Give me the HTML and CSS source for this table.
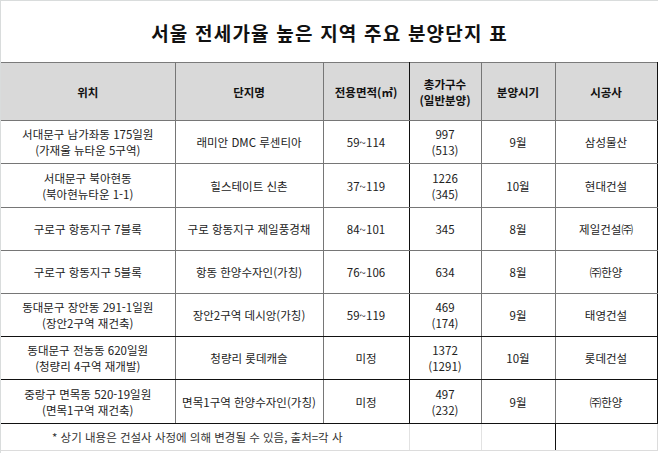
FILE: index.html
```html
<!DOCTYPE html>
<html lang="ko">
<head>
<meta charset="utf-8">
<link rel="stylesheet" href="styles.css">
</head>
<body>
<div class="sheet">
  <div class="title">서울 전세가율 높은 지역 주요 분양단지 표</div>
  <table class="grid">
    <colgroup>
      <col class="c1"><col class="c2"><col class="c3"><col class="c4"><col class="c5"><col class="c6">
    </colgroup>
    <thead>
      <tr class="head">
        <td>위치</td><td>단지명</td><td>전용면적(㎡)</td><td>총가구수<br>(일반분양)</td><td>분양시기</td><td>시공사</td>
      </tr>
    </thead>
    <tbody>
      <tr class="r43">
        <td>서대문구 남가좌동 175일원<br>(가재울 뉴타운 5구역)</td><td>래미안 DMC 루센티아</td><td>59~114</td><td>997<br>(513)</td><td>9월</td><td>삼성물산</td>
      </tr>
      <tr class="r44">
        <td>서대문구 북아현동<br>(북아현뉴타운 1-1)</td><td>힐스테이트 신촌</td><td>37~119</td><td>1226<br>(345)</td><td>10월</td><td>현대건설</td>
      </tr>
      <tr class="r43">
        <td>구로구 항동지구 7블록</td><td>구로 항동지구 제일풍경채</td><td>84~101</td><td>345</td><td>8월</td><td>제일건설㈜</td>
      </tr>
      <tr class="r43">
        <td>구로구 항동지구 5블록</td><td>항동 한양수자인(가칭)</td><td>76~106</td><td>634</td><td>8월</td><td>㈜한양</td>
      </tr>
      <tr class="r43 dark">
        <td>동대문구 장안동 291-1일원<br>(장안2구역 재건축)</td><td>장안2구역 데시앙(가칭)</td><td>59~119</td><td>469<br>(174)</td><td>9월</td><td>태영건설</td>
      </tr>
      <tr class="r43 dark">
        <td>동대문구 전농동 620일원<br>(청량리 4구역 재개발)</td><td>청량리 롯데캐슬</td><td>미정</td><td>1372<br>(1291)</td><td>10월</td><td>롯데건설</td>
      </tr>
      <tr class="r44 dark">
        <td>중랑구 면목동 520-19일원<br>(면목1구역 재건축)</td><td>면목1구역 한양수자인(가칭)</td><td>미정</td><td>497<br>(232)</td><td>9월</td><td>㈜한양</td>
      </tr>
      <tr class="foot">
        <td colspan="3" class="note">* 상기 내용은 건설사 사정에 의해 변경될 수 있음, 출처=각 사</td><td></td><td></td><td></td>
      </tr>
    </tbody>
  </table>
</div>
</body>
</html>
```

FILE: styles.css
```css
html, body {
  margin: 0;
  padding: 0;
  background: #ffffff;
}

body {
  font-family: "Noto Sans CJK KR", "Noto Sans", sans-serif;
  color: #222;
}

.sheet {
  width: 658px;
  height: 453px;
  box-sizing: border-box;
  border-left: 1px solid #d9dcdc;
  border-top: 1px solid #d9dcdc;
  overflow: hidden;
}

.title {
  height: 61px;
  display: flex;
  align-items: center;
  justify-content: center;
  font-size: 19px;
  font-weight: 700;
  color: #111;
  letter-spacing: 1.2px;
  padding-top: 2px;
  box-sizing: border-box;
}

.grid {
  border-collapse: collapse;
  table-layout: fixed;
  width: 656px;
  font-size: 11.5px;
  line-height: 16px;
}

.c1 { width: 174px; }
.c2 { width: 148px; }
.c3 { width: 86px; }
.c4 { width: 72px; }
.c5 { width: 74px; }
.c6 { width: 102px; }

.grid td {
  padding: 0;
  text-align: center;
  vertical-align: middle;
  border-right: 1px solid #767676;
  border-bottom: 1px solid #767676;
  white-space: nowrap;
}

.grid td:nth-child(3) {
  border-right-color: #111;
}

.grid td:last-child {
  border-right-color: #111;
}

.head td {
  height: 57px;
  background: #d9d9d9;
  border-top: 1px solid #7a7a7a;
  font-weight: 700;
  color: #111;
}

.r43 td { height: 42px; }
.r44 td { height: 43px; }

.dark td {
  border-bottom-color: #111;
}

.foot td {
  height: 26px;
  border-right-color: #e2e2e2;
  border-bottom-color: #dcdcdc;
}

.foot td.note {
  text-align: left;
  padding-left: 51px;
  color: #333;
  border-right-color: #e2e2e2;
}

.foot td:last-child {
  border-right-color: #dcdcdc;
}
```
